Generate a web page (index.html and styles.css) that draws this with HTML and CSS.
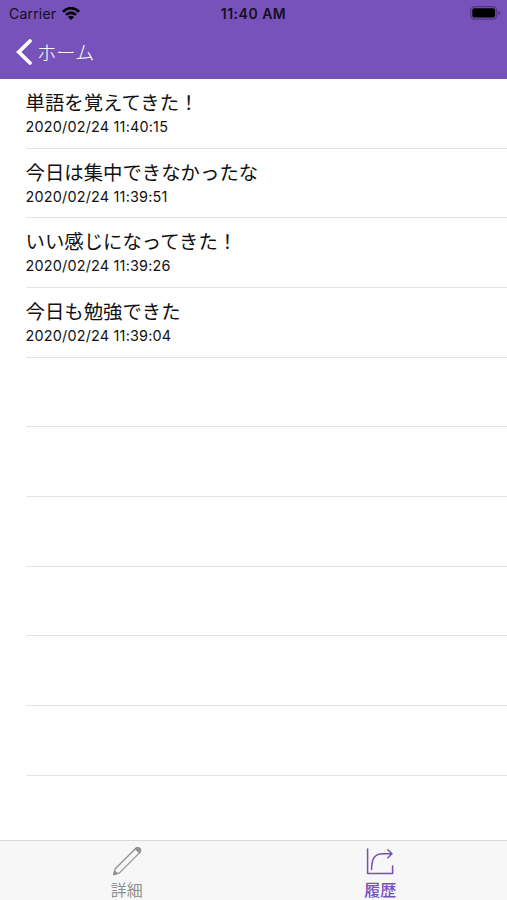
FILE: index.html
```html
<!DOCTYPE html>
<html lang="ja">
<head>
<meta charset="utf-8">
<title>履歴</title>
<link rel="stylesheet" href="styles.css">
</head>
<body>
<div class="app">
<header class="header">
  <div class="status">
    <div class="carrier"><span>Carrier</span>
      <svg class="wifi" width="18" height="14" viewBox="0 0 18 14"><path d="M0 3.8Q9-4.2 18 3.8L16.2 5.7Q9-.6 1.8 5.7Z"/><path d="M3 6.9Q9 1.8 15 6.9L13.1 8.8Q9 5.5 4.9 8.8Z"/><path d="M6 9.9Q9 7.6 12 9.9L9 12.9Z"/></svg>
    </div>
    <span class="time">11:40 AM</span>
    <svg class="battery" width="31" height="14" viewBox="0 0 31 14"><rect x=".7" y=".7" width="26" height="12.4" rx="3.8" fill="none" stroke="#513582" stroke-width="1.2"/><rect x="2.3" y="2.3" width="22.8" height="9.2" rx="2"/><path d="M28.3 4.7q2 .5 2 2.2t-2 2.2z" fill="#513582"/></svg>
  </div>
  <nav class="nav">
    <svg width="18" height="28" viewBox="0 0 18 28"><path d="M15 3L3.8 14L15 25" fill="none" stroke="#fff" stroke-width="3.8" stroke-linecap="round" stroke-linejoin="miter"/></svg>
    <span>ホーム</span>
  </nav>
</header>
<main class="list">
  <div class="row"><div class="title">単語を覚えてきた！</div><div class="date">2020/02/24 11:40:15</div></div>
  <div class="row"><div class="title">今日は集中できなかったな</div><div class="date">2020/02/24 11:39:51</div></div>
  <div class="row"><div class="title">いい感じになってきた！</div><div class="date">2020/02/24 11:39:26</div></div>
  <div class="row"><div class="title">今日も勉強できた</div><div class="date">2020/02/24 11:39:04</div></div>
  <div class="row"></div><div class="row"></div><div class="row"></div><div class="row"></div><div class="row"></div><div class="row"></div>
</main>
<footer class="tabs">
  <div class="tab">
    <svg width="32" height="32" viewBox="0 0 32 32" fill="none" stroke="currentColor" stroke-width="1.3" stroke-linejoin="round"><path d="M2.7 28.5L4.3 22.7L24.3 2.7Q26.5.7 28.8 2.4Q30.5 4.7 28.5 6.9L8.5 26.9Z"/><path d="M24.3 2.7Q26.5.7 28.8 2.4Q30.5 4.7 28.5 6.9ZM2.7 28.5L3.6 25.2L6 27.6Z" fill="currentColor"/></svg>
    <span>詳細</span>
  </div>
  <div class="tab active">
    <svg width="32" height="32" viewBox="0 0 32 32" fill="none" stroke="currentColor" stroke-width="1.5" stroke-linecap="round" stroke-linejoin="round"><path d="M3.6 3V27.5H28.6V20M7.6 23.5C7.6 12 11 7.7 19 7.7H28M23.8 3.7L28 7.7L23.8 11.7"/></svg>
    <span>履歴</span>
  </div>
</footer>
</div>
</body>
</html>
```
FILE: styles.css
```css
* { box-sizing: border-box; }
body { margin: 0; background: #fff; color: #000; font-family: Inter, "Noto Sans CJK JP", sans-serif; }
.app { height: 900px; display: flex; flex-direction: column; overflow: hidden; }
.header { height: 79px; background: #7752ba; flex: none; }
.status { height: 27px; display: grid; grid-template-columns: 1fr auto 1fr; align-items: center; padding: 0 6px 0 9px; font-size: 14px; color: #150e21; }
.carrier { display: flex; align-items: center; gap: 6px; letter-spacing: .2px; }
.time { font-weight: 600; letter-spacing: .5px; margin-right: 3px; }
.battery { justify-self: end; margin-bottom: 1px; }
.nav { height: 52px; display: flex; align-items: center; gap: 4px; padding: 0 0 2px 15px; color: #fff; font-size: 19.3px; font-weight: 300; }
.nav span { line-height: 28px; margin-top: 1px; }
.list { flex: 1; padding-left: 26px; }
.row { height: 69.67px; border-bottom: 1px solid #e4e4e5; padding-top: 11px; }
.title { font-size: 19.4px; line-height: 26px; color: #111; margin-left: -.5px; }
.date { font-size: 14.4px; line-height: 22px; letter-spacing: .2px; color: #111; margin-left: -.5px; }
.tabs { height: 60px; flex: none; display: grid; grid-template-columns: 1fr 1fr; background: #f7f7f7; border-top: 1px solid #d9d9d9; }
.tab { display: flex; flex-direction: column; align-items: center; padding-top: 5px; color: #929292; font-size: 16px; line-height: 24px; }
.tab svg { flex: none; }
.active { color: #7650b9; }
.active span { font-weight: 500; }
```
